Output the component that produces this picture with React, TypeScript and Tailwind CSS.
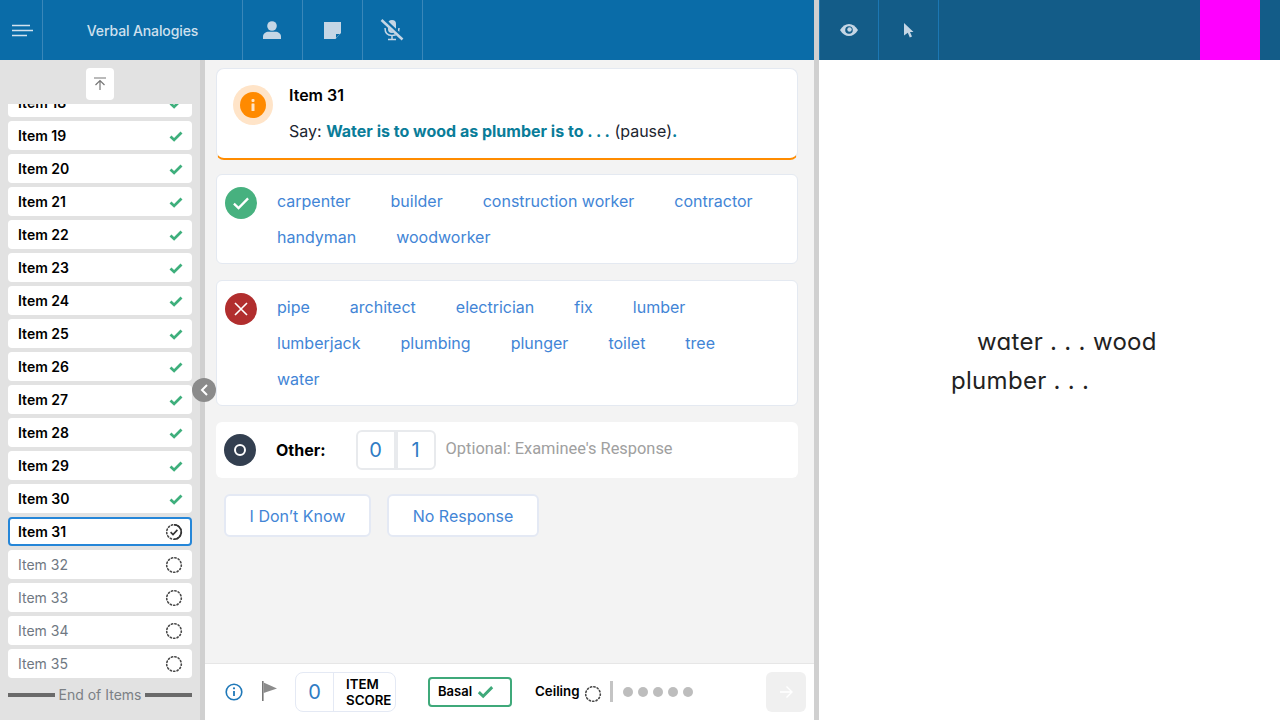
import React from "react";

const F = "font-['Inter','Liberation_Sans',sans-serif]";

function Dotted({ check }: { check?: boolean }) {
  return (
    <svg width="18" height="18" viewBox="0 0 18 18" fill="none">
      <circle cx="9" cy="9" r="7.300" stroke="#484848" strokeWidth="1.600" strokeDasharray="1.300 2.200" strokeLinecap="round" />
      {check && <path d="M9 1.700a7.300 7.300 0 0 1 0 14.600" stroke="#333" strokeWidth="1.600" />}
      {check && <path d="M5.600 9.200l2.400 2.300 4.400-4.600" stroke="#333" strokeWidth="1.600" />}
    </svg>
  );
}

function Check({ size = 14, color = "#3eaf7c", w = 2.800 }: { size?: number; color?: string; w?: number }) {
  return (
    <svg width={size} height={size} viewBox="0 0 14 14" fill="none">
      <path d="M1.500 7.500l3.600 3.400L12.500 3.400" stroke={color} strokeWidth={w} />
    </svg>
  );
}

function Row({ n, state }: { n: number; state: "done" | "current" | "todo" }) {
  const box =
    state === "current"
      ? "border-2 border-[#2586d8] px-2 font-semibold text-black"
      : state === "done"
      ? "px-2.5 font-semibold text-black"
      : "px-2.5 text-[#6f7882]";
  return (
    <div className={`h-[29px] shrink-0 rounded bg-white flex items-center justify-between text-sm ${box}`}>
      <span>Item {n}</span>
      {state === "done" ? (
        <span className="-mr-[1px]"><Check /></span>
      ) : (
        <span className="-mr-[1px]"><Dotted check={state === "current"} /></span>
      )}
    </div>
  );
}

function HeaderCell({ w, children, dark }: { w: string; children?: React.ReactNode; dark?: boolean }) {
  return (
    <div className={`${w} h-full shrink-0 flex items-center justify-center border-r ${dark ? "border-[#1c77b3]" : "border-[#3a87b9]"}`}>
      {children}
    </div>
  );
}

function Chips({ words }: { words: string[] }) {
  return (
    <div className="flex flex-wrap gap-x-10 text-base text-[#4285d6] leading-9">
      {words.map((w) => (
        <span key={w}>{w}</span>
      ))}
    </div>
  );
}

export default function App() {
  const items: number[] = [];
  for (let i = 18; i <= 35; i++) items.push(i);
  return (
    <div className={`${F} w-[1280px] h-[720px] overflow-hidden flex bg-white relative`}>
      {/* left pane */}
      <div className="w-[814px] h-full flex flex-col shrink-0">
        <div className="h-[60px] bg-[#0a6ca8] flex shrink-0 text-[#c5d6e5]">
          <HeaderCell w="w-[43px]">
            <svg width="22" height="14" viewBox="0 0 22 14" className="ml-[3px] mt-[1px]">
              <path d="M0 1.500h18M0 6.500h21M0 11.500h15" stroke="#d3e2ee" strokeWidth="1.600" />
            </svg>
          </HeaderCell>
          <HeaderCell w="w-[200px]">
            <span className="text-sm font-medium text-[#cfe0ee] tracking-[-0.12px] mt-[2px]">Verbal Analogies</span>
          </HeaderCell>
          <HeaderCell w="w-[60px]">
            <svg width="18" height="18" viewBox="0 0 18 18" fill="#c5d6e5" className="-ml-[2px]">
              <circle cx="9" cy="5" r="4.800" />
              <path d="M0 18v-2.500C0 12.500 3 10.800 5.500 10.800h7c2.500 0 5.500 1.700 5.500 4.700V18z" />
            </svg>
          </HeaderCell>
          <HeaderCell w="w-[60px]">
            <svg width="17" height="17" viewBox="0 0 17 17" className="-ml-[1px]">
              <path d="M0 0h17v11l-5.500 6H0z" fill="#c5d6e5" />
              <path d="M12 12h4l-4 4z" fill="#0a6ca8" />
            </svg>
          </HeaderCell>
          <HeaderCell w="w-[60px]">
            <svg width="24" height="22" viewBox="0 0 24 22" fill="none" className="-ml-[2px]">
              <rect x="8" y="1" width="8" height="13" rx="4" fill="#c5d6e5" />
              <path d="M5 9c0 5 3 7.500 7 7.500s7-2.500 7-7.500M12 16.500V20M8 20.500h8" stroke="#c5d6e5" strokeWidth="1.500" />
              <path d="M3 0.500l20 19" stroke="#0a6ca8" strokeWidth="4.500" />
              <path d="M1.500 1l21 19.500" stroke="#c5d6e5" strokeWidth="2.500" />
            </svg>
          </HeaderCell>
        </div>
        <div className="flex-1 flex min-h-0">
          {/* sidebar */}
          <div className="w-[205px] shrink-0 bg-[#e2e2e2] border-r-[5px] border-[#d0d0d0] flex flex-col px-2 relative">
            <div className="h-[44px] shrink-0 flex justify-center pt-2">
              <div className="w-7 h-8 rounded bg-white flex items-center justify-center">
                <svg width="14" height="14" viewBox="0 0 14 14" fill="none" stroke="#777" strokeWidth="1.200">
                  <path d="M1 1h12M7 13V3.500M2.500 8L7 3.500 11.500 8" />
                </svg>
              </div>
            </div>
            <div className="h-[574px] shrink-0 overflow-hidden">
              <div className="flex flex-col gap-1 -mt-[16px]">
                {items.map((n) => (
                  <Row key={n} n={n} state={n < 31 ? "done" : n === 31 ? "current" : "todo"} />
                ))}
              </div>
            </div>
            <div className="flex items-center gap-1 text-sm text-[#7b8085] mt-[7px]">
              <div className="flex-1 h-1 bg-[#6a6a6a]" />
              <span>End of Items</span>
              <div className="flex-1 h-1 bg-[#6a6a6a]" />
            </div>
          </div>
          {/* main */}
          <div className="flex-1 flex flex-col min-w-0 bg-[#f3f3f3]">
            <div className="flex-1 pt-2 pl-[11px] pr-4 flex flex-col min-h-0">
              <div className="h-[92px] rounded-lg bg-white border border-[#e4e9f1] border-b-2 border-b-[#ff8c00] flex pl-4 pt-4">
                <div className="w-10 h-10 rounded-full bg-[#ffe4c8] flex items-center justify-center shrink-0">
                  <div className="w-[26px] h-[26px] rounded-full bg-[#ff8a00] flex items-center justify-center">
                    <svg width="4" height="12" viewBox="0 0 4 12" fill="#ffe4c8">
                      <rect x="0.500" y="0" width="3" height="3" rx="1" />
                      <rect x="0.500" y="4.500" width="3" height="7.500" rx="0.500" />
                    </svg>
                  </div>
                </div>
                <div className="ml-4 -mt-[2px]">
                  <div className="text-base font-semibold text-black leading-6">Item 31</div>
                  <div className="text-base text-[#1c2530] leading-6 mt-3">
                    Say: <span className="font-bold text-[#0a7d99]">Water is to wood as plumber is to . . .</span> (pause)<span className="font-bold text-[#0a7d99]">.</span>
                  </div>
                </div>
              </div>
              <div className="mt-[14px] h-[90px] rounded-md bg-white border border-[#e4e9f1] flex pl-2 pt-2">
                <div className="w-8 h-8 mt-[4px] rounded-full bg-[#47b17f] flex items-center justify-center shrink-0">
                  <Check size={18} color="#fff" w={1.800} />
                </div>
                <div className="ml-5 w-[500px]">
                  <Chips words={["carpenter", "builder", "construction worker", "contractor", "handyman", "woodworker"]} />
                </div>
              </div>
              <div className="mt-4 h-[126px] rounded-md bg-white border border-[#e4e9f1] flex pl-2 pt-2">
                <div className="w-8 h-8 mt-[4px] rounded-full bg-[#b12e2e] flex items-center justify-center shrink-0">
                  <svg width="14" height="14" viewBox="0 0 14 14" fill="none" stroke="#fff" strokeWidth="1.600">
                    <path d="M1 1l12 12M13 1L1 13" />
                  </svg>
                </div>
                <div className="ml-5 w-[500px]">
                  <Chips words={["pipe", "architect", "electrician", "fix", "lumber", "lumberjack", "plumbing", "plunger", "toilet", "tree", "water"]} />
                </div>
              </div>
              <div className="mt-4 h-14 rounded-md bg-white flex items-center pl-2">
                <div className="w-8 h-8 rounded-full bg-[#333f50] flex items-center justify-center shrink-0">
                  <div className="w-3 h-3 rounded-full border-2 border-white" />
                </div>
                <span className="ml-5 text-base font-bold text-black">Other:</span>
                <div className="ml-[30px] flex h-10 w-20 rounded-md border-2 border-[#e8eaed] text-xl text-[#2f7cc4]">
                  <div className="flex-1 flex items-center justify-center border-r-4 border-[#e8eaed]">0</div>
                  <div className="flex-1 flex items-center justify-center">1</div>
                </div>
                <span className="ml-[10px] text-[16.400px] text-[#a0a0a0] font-['Roboto',sans-serif] -mt-[1px]">Optional: Examinee&apos;s Response</span>
              </div>
              <div className="mt-4 ml-2 flex gap-4 text-base text-[#4285d6]">
                <div className="h-[43px] w-[147px] rounded-md bg-white border-2 border-[#e4e9f4] flex items-center justify-center">I Don’t Know</div>
                <div className="h-[43px] w-[152px] rounded-md bg-white border-2 border-[#e4e9f4] flex items-center justify-center">No Response</div>
              </div>
            </div>
            <div className="h-[57px] shrink-0 bg-white border-t border-[#e6e6e6] flex items-center pl-5 pr-2">
              <svg width="18" height="18" viewBox="0 0 18 18" fill="none" className="-mt-[1px]">
                <circle cx="9" cy="9" r="7.800" stroke="#1f78b8" strokeWidth="1.600" />
                <path d="M9 8v5" stroke="#1f78b8" strokeWidth="1.800" />
                <circle cx="9" cy="5.300" r="1.100" fill="#1f78b8" />
              </svg>
              <svg width="18" height="20" viewBox="0 0 18 20" className="ml-[18px] -mt-[2px]">
                <path d="M1 0h1.600v20H1z" fill="#777" />
                <path d="M2.600 1.500L16 7.500 2.600 12z" fill="#8c8c8c" />
              </svg>
              <div className="ml-[16px] flex w-[101px] h-10 rounded-lg border border-[#e4e9f4] -mt-[1px]">
                <div className="w-[38px] flex items-center justify-center border-r border-[#e4e9f4] text-xl text-[#2f7cc4]">0</div>
                <div className="pl-3 text-[13.300px] font-semibold leading-4 text-black flex flex-col justify-center whitespace-nowrap">
                  <span>ITEM</span>
                  <span>SCORE</span>
                </div>
              </div>
              <div className="ml-8 w-[84px] h-[30px] rounded border-2 border-[#3fa97a] flex items-center pl-[8px] gap-[5px] -mt-[1px]">
                <span className="text-[13px] font-semibold text-black">Basal</span>
                <Check size={17} color="#3fa97a" w={2.400} />
              </div>
              <span className="ml-[23px] text-[13.300px] font-semibold text-black">Ceiling</span>
              <span className="ml-[4px] mt-[3px]"><Dotted /></span>
              <div className="ml-[8px] w-[3px] h-[21px] bg-[#c4c4c4] -mt-[1px]" />
              <div className="ml-[10px] flex gap-[5px] -mt-[1px]">
                <div className="w-2.5 h-2.5 rounded-full bg-[#bdbdbd]" />
                <div className="w-2.5 h-2.5 rounded-full bg-[#bdbdbd]" />
                <div className="w-2.5 h-2.5 rounded-full bg-[#bdbdbd]" />
                <div className="w-2.5 h-2.5 rounded-full bg-[#bdbdbd]" />
                <div className="w-2.5 h-2.5 rounded-full bg-[#bdbdbd]" />
              </div>
              <div className="ml-auto w-10 h-10 rounded-md bg-[#f0f0f0] flex items-center justify-center -mt-[1px]">
                <svg width="14" height="14" viewBox="0 0 14 14" fill="none" stroke="#fff" strokeWidth="1.400">
                  <path d="M1 7h12M7.500 1.500L13 7l-5.500 5.500" />
                </svg>
              </div>
            </div>
          </div>
        </div>
      </div>
      {/* splitter */}
      <div className="w-[5px] h-full bg-[#d0d0d0] shrink-0" />
      {/* right pane */}
      <div className="flex-1 h-full flex flex-col min-w-0">
        <div className="h-[60px] bg-[#135c88] flex shrink-0 border-l border-[#1c77b3]">
          <HeaderCell w="w-[59px]" dark>
            <svg width="18" height="12" viewBox="0 0 18 12">
              <path d="M0 6C2.500 2 5.500 0 9 0s6.500 2 9 6c-2.500 4-5.500 6-9 6S2.500 10 0 6z" fill="#c5d6e5" />
              <circle cx="9" cy="6" r="3.800" fill="#135c88" />
              <circle cx="9.500" cy="5.500" r="2.200" fill="#c5d6e5" />
            </svg>
          </HeaderCell>
          <HeaderCell w="w-[60px]" dark>
            <svg width="10" height="15" viewBox="0 0 10 15" fill="#c5d6e5">
              <path d="M0 0l9.500 9H6l2 4.500-2.200 1-2-4.700L0 12.500z" />
            </svg>
          </HeaderCell>
          <div className="ml-auto mr-5 w-[60px] h-full bg-[#ff00ff]" />
        </div>
        <div className="flex-1 relative">
          <div className="absolute left-[132px] top-[262px] text-2xl leading-[39px] tracking-[0.3px] text-[#222] whitespace-nowrap [font-feature-settings:'cv11']">
            <div className="ml-[26px]">water . . . wood</div>
            <div>plumber . . .</div>
          </div>
        </div>
      </div>
      {/* collapse handle */}
      <div className="absolute left-[192px] top-[378px] w-6 h-6 rounded-full bg-[#8b8b8b] flex items-center justify-center">
        <svg width="9" height="12" viewBox="0 0 9 12" fill="none" stroke="#fff" strokeWidth="2">
          <path d="M7 1L2 6l5 5" />
        </svg>
      </div>
    </div>
  );
}
